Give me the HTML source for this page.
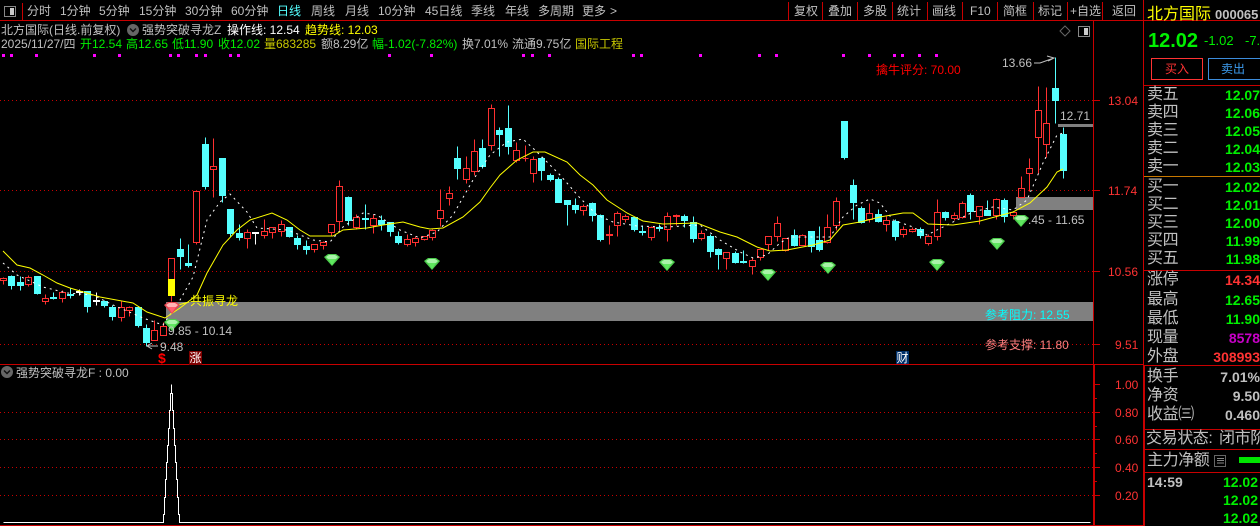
<!DOCTYPE html>
<html><head><meta charset="utf-8"><title>K</title>
<style>
html,body{margin:0;padding:0;background:#000;width:1260px;height:526px;overflow:hidden}
#r{position:relative;width:1260px;height:526px;overflow:hidden;background:#000;font-family:"Liberation Sans","WenQuanYi Zen Hei","Noto Sans CJK SC",sans-serif;font-size:12px;color:#c0c0c0}
#r span{position:absolute;white-space:nowrap;line-height:14px}
.l{font-size:16px;line-height:18px!important;letter-spacing:-.4px}
.v{font-size:14px;font-weight:bold;line-height:16px!important;right:0}
.g{color:#00f000}.w{color:#fff}.y{color:#ff0}.a{color:#f33}.o{color:#c8c800}
svg{position:absolute;left:0;top:0}
</style></head><body><div id="r">
<svg width="1260" height="526" viewBox="0 0 1260 526">
<defs>
<g id="gg"><path d="M-8 3L-4 0H4L8 3L0 12Z" fill="#4ccc4c"/><path d="M-6 3L-3 1H3L6 3L4 5H-4Z" fill="#a8f4a8"/><path d="M-4 5H4L0 11Z" fill="#60e860"/></g>
<g id="gr"><path d="M-8 3L-4 0H4L8 3L0 12Z" fill="#e84650"/><path d="M-6 3L-3 1H3L6 3L4 5H-4Z" fill="#ffb4b4"/><path d="M-4 5H4L0 11Z" fill="#ff6070"/></g>
</defs>
<g fill="#808080" shape-rendering="crispEdges">
<rect x="166" y="302" width="927" height="19"/><rect x="1016" y="197" width="77" height="13"/><rect x="1058" y="124" width="35" height="3"/>
</g>
<g stroke="#c80000" stroke-dasharray="1 3" shape-rendering="crispEdges">
<path d="M0 100.5H1093M0 190.5H1093M0 271.5H1093M0 344.5H1093M0 412.5H1093M0 439.5H1093M0 467.5H1093M0 495.5H1093"/>
</g>
<g transform="translate(.5 .5)" shape-rendering="crispEdges">
<path fill="none" stroke="#ff3030" d="M3 277V278M3 280V284M0 278h6V280h-6zM28 275V277M28 284V286M25 277h6V284h-6zM45 294V298M45 301V304M42 298h6V301h-6zM62 290V292M62 298V302M59 292h6V298h-6zM121 301V307M121 317V321M118 307h6V317h-6zM129 306V307M129 310V316M126 307h6V310h-6zM154 320V330M151 330h6V340h-6zM163 322V326M160 326h6V335h-6zM171 295V301M168 258h6V279h-6zM196 242V244M193 191h6V242h-6zM213 138V166M213 169V197M210 166h6V169h-6zM247 229V232M247 238V248M244 232h6V238h-6zM264 219V231M264 235V238M261 231h6V235h-6zM272 232V238M269 227h6V232h-6zM281 220V224M281 231V236M278 224h6V231h-6zM314 249V252M311 244h6V249h-6zM323 241V242M323 245V249M320 242h6V245h-6zM331 232V236M328 224h6V232h-6zM339 180V186M339 221V230M336 186h6V221h-6zM356 214V217M356 227V229M353 217h6V227h-6zM373 214V218M373 225V233M370 218h6V225h-6zM407 234V239M407 244V246M404 239h6V244h-6zM415 236V238M415 242V246M412 238h6V242h-6zM424 239V240M421 236h6V239h-6zM432 229V230M432 237V240M429 230h6V237h-6zM440 189V210M440 218V226M437 210h6V218h-6zM449 186V193M449 198V205M446 193h6V198h-6zM466 156V168M466 179V183M463 168h6V179h-6zM474 139V151M474 171V175M471 151h6V171h-6zM491 104V108M491 145V150M488 108h6V145h-6zM516 142V150M516 160V162M513 150h6V160h-6zM525 145V161M522 158h6M533 156V159M533 173V182M530 159h6V173h-6zM583 204V206M583 210V215M580 206h6V210h-6zM609 225V244M606 234h6V235h-6zM617 211V213M617 225V236M614 213h6V225h-6zM625 214V216M625 219V222M622 216h6V219h-6zM651 226V227M651 237V240M648 227h6V237h-6zM667 212V216M667 229V241M664 216h6V229h-6zM676 214V225M673 215h6V216h-6zM701 230V233M701 238V240M698 233h6V238h-6zM726 258V269M723 252h6V258h-6zM752 257V260M752 266V274M749 260h6V266h-6zM760 257V260M757 249h6V257h-6zM768 244V250M765 236h6V244h-6zM777 216V223M777 236V241M774 223h6V236h-6zM785 250V251M782 238h6V250h-6zM802 234V235M799 235h6V245h-6zM827 214V227M827 242V243M824 227h6V242h-6zM836 197V201M836 225V230M833 201h6V225h-6zM869 203V213M869 219V222M866 213h6V219h-6zM886 216V220M886 224V231M883 220h6V224h-6zM903 226V229M903 234V237M900 229h6V234h-6zM912 227V229M912 231V232M909 229h6V231h-6zM928 234V236M928 243V245M925 236h6V243h-6zM937 199V212M937 236V240M934 212h6V236h-6zM954 212V215M954 218V220M951 215h6V218h-6zM962 201V203M962 217V218M959 203h6V217h-6zM979 216V224M976 206h6V216h-6zM996 198V199M996 215V219M993 199h6V215h-6zM1013 215V219M1010 212h6V215h-6zM1021 176V188M1018 188h6V197h-6zM1029 158V168M1029 173V191M1026 168h6V173h-6zM1038 86V110M1038 137V173M1035 110h6V137h-6zM1046 87V123M1046 144V157M1043 123h6V144h-6z"/>
<rect x="168" y="279" width="6" height="16" fill="#ff0" stroke="#ff0"/>
<path fill="#55ffff" stroke="#55ffff" d="M11 275V289M8 276h6V285h-6zM20 276V290M17 282h6V285h-6zM37 276V294M34 276h6V293h-6zM53 292V299M50 297h6V298h-6zM70 288V298M67 294h6V295h-6zM87 291V312M84 291h6V306h-6zM104 300V307M101 301h6V305h-6zM112 305V320M109 307h6V316h-6zM138 306V327M135 307h6V325h-6zM146 324V346M143 328h6V342h-6zM180 238V269M177 249h6V256h-6zM188 244V267M185 263h6V265h-6zM205 137V189M202 144h6V186h-6zM222 158V202M219 158h6V195h-6zM230 209V237M227 209h6V233h-6zM239 224V240M236 233h6V237h-6zM289 227V237M286 227h6V236h-6zM297 235V249M294 238h6V244h-6zM306 240V254M303 246h6V249h-6zM348 196V225M345 197h6V220h-6zM365 204V229M362 218h6V219h-6zM381 215V230M378 220h6V224h-6zM390 222V236M387 222h6V231h-6zM398 231V244M395 236h6V242h-6zM457 146V179M454 158h6V168h-6zM482 139V168M479 148h6V166h-6zM499 127V156M496 130h6V134h-6zM508 105V154M505 128h6V146h-6zM541 157V180M538 158h6V170h-6zM550 173V181M547 175h6V179h-6zM558 177V202M555 179h6V202h-6zM567 200V225M564 200h6V204h-6zM575 198V213M572 205h6V209h-6zM592 202V221M589 203h6V215h-6zM600 214V241M597 215h6V239h-6zM634 217V231M631 217h6V229h-6zM642 225V235M639 231h6V232h-6zM659 224V231M656 227h6V228h-6zM684 214V227M681 216h6V220h-6zM693 216V242M690 222h6V238h-6zM710 234V257M707 236h6V251h-6zM718 248V269M715 249h6V254h-6zM735 251V263M732 253h6V262h-6zM743 250V263M740 261h6V262h-6zM794 229V246M791 235h6V245h-6zM811 231V252M808 231h6V246h-6zM819 226V251M816 240h6V249h-6zM844 121V159M841 121h6V157h-6zM853 179V219M850 185h6V202h-6zM861 206V223M858 208h6V222h-6zM878 209V222M875 214h6V221h-6zM895 219V240M892 221h6V236h-6zM920 227V238M917 229h6V235h-6zM945 211V220M942 212h6V217h-6zM970 193V219M967 195h6V211h-6zM987 200V215M984 210h6V215h-6zM1004 198V222M1001 200h6V216h-6zM1055 57V123M1052 88h6V100h-6zM1063 127V178M1060 134h6V170h-6z"/>
<path fill="none" stroke="#fff" d="M79 289V295M76 291h6V292h-6zM96 292V305M93 300h6V301h-6zM255 232V244M252 232h6V233h-6z"/>
</g>
<polyline fill="none" stroke="#fff" stroke-width="1" stroke-dasharray="2 4" points="3,263 17,275 43,287 67,293 93,295 113,305 143,318 163,325 180,300 193,277 207,220 220,202 230,194 247,212 257,228 287,230 313,240 330,242 343,227 363,213 377,215 400,230 420,238 437,232 453,215 473,180 490,155 507,142 523,139 537,152 560,175 580,198 597,215 613,222 637,226 667,227 700,225 720,240 740,252 753,258 767,255 780,243 790,237 813,237 830,237 843,217 857,205 870,199 880,203 893,220 913,227 927,235 947,225 973,212 993,207 1013,210 1027,200 1043,163 1057,135 1063,133"/>
<polyline fill="none" stroke="#ff0" stroke-width="1" points="3,251 17,265 30,268 43,275 57,283 70,288 100,297 133,303 147,312 165,318 180,308 197,295 207,273 223,245 237,230 250,220 272,213 287,220 300,230 310,236 333,236 343,230 367,228 383,225 403,222 420,227 430,229 443,228 463,217 480,202 490,188 500,175 517,160 533,152 545,152 567,162 580,175 593,185 607,200 627,213 643,221 663,224 697,223 720,232 737,237 757,247 770,251 787,250 813,245 830,240 843,225 860,222 880,217 903,213 913,213 928,224 953,225 980,221 1013,212 1030,203 1047,187 1057,172 1063,169"/>
<path d="M178 305l11-3" stroke="#ff0" fill="none"/>
<path d="M1034 63H1040L1054 58M1047 56l7 2-6 3" stroke="#c0c0c0" fill="none"/>
<path d="M148 346H158M152 343l-5 3 5 3" stroke="#c0c0c0" fill="none"/>
<use href="#gg" x="332" y="254"/><use href="#gg" x="432" y="258"/><use href="#gg" x="667" y="259"/><use href="#gg" x="768" y="269"/><use href="#gg" x="828" y="262"/><use href="#gg" x="937" y="259"/><use href="#gg" x="997" y="238"/><use href="#gg" x="1021" y="215"/><use href="#gg" x="172" y="319"/><use href="#gr" x="172" y="302"/>
<g fill="#f0f" shape-rendering="crispEdges"><path d="M2 54h3v3H2zM10 54h3v3h-3zM35 54h3v3h-3zM93 54h3v3h-3zM118 54h3v3h-3zM169 54h3v3h-3zM177 54h3v3h-3zM195 54h3v3h-3zM204 54h3v3h-3zM229 54h3v3h-3zM237 54h3v3h-3zM388 54h3v3h-3zM430 54h3v3h-3zM522 54h3v3h-3zM531 54h3v3h-3zM548 54h3v3h-3zM632 54h3v3h-3zM640 54h3v3h-3zM699 54h3v3h-3zM758 54h3v3h-3zM775 54h3v3h-3zM842 54h3v3h-3zM868 54h3v3h-3zM893 54h3v3h-3zM901 54h3v3h-3zM918 54h3v3h-3zM935 54h3v3h-3z"/></g>
<path fill="none" stroke="#fff" shape-rendering="crispEdges" transform="translate(.5 .5)" d="M3 522H163V514H164V497H165V479H166V462H167V445H168V428H169V410H170V393H171V384V393H172V410H173V428H174V445H175V462H176V479H177V497H178V514H179V522H1090"/>
<g fill="none" stroke="#c80000" shape-rendering="crispEdges">
<path d="M0 20.5H1260M22.5 3V20M788.5 2V20M822.5 2V20M857.5 2V20M892.5 2V20M927.5 2V20M962.5 2V20M997.5 2V20M1033.5 2V20M1067.5 2V20M1102.5 2V20M1143.5 0V526M1093.5 21V526M0 364.5H1143M1144 85.5H1260M1144 270.5H1260M1144 365.5H1260M1144 429.5H1260M1144 449.5H1260M1144 472.5H1260M0 525.5H1143"/>
<path d="M1093 100.5H1100M1093 190.5H1100M1093 271.5H1100M1093 344.5H1100M1094 384.5H1100M1094 398.5H1097M1094 412.5H1100M1094 426.5H1097M1094 439.5H1100M1094 453.5H1097M1094 467.5H1100M1094 481.5H1097M1094 495.5H1100"/>
<path d="M1094.5 365V525M1144.5 365V526" stroke-width="1"/>
</g>
<path d="M1144 176.5H1260" stroke="#c87800" shape-rendering="crispEdges"/>
<rect x="1151.5" y="58.5" width="51" height="21" fill="none" stroke="#f33" shape-rendering="crispEdges"/>
<rect x="1208.5" y="58.5" width="60" height="21" fill="none" stroke="#3c8cdc" shape-rendering="crispEdges"/>
<g shape-rendering="crispEdges">
<rect x="4.5" y="6.5" width="11" height="10" fill="#000" stroke="#888"/><rect x="10" y="8" width="4" height="7" fill="#ccc"/>
<rect x="1078.5" y="26.5" width="11" height="10" fill="#000" stroke="#888"/><rect x="1084" y="28" width="4" height="7" fill="#ccc"/>
</g>
<path d="M1065 26l5 5-5 5-5-5z" fill="none" stroke="#666"/>
<circle cx="133" cy="30" r="6" fill="#666"/><path d="M130 28.5l3 3 3-3" fill="none" stroke="#111" stroke-width="1.5"/>
<circle cx="7" cy="372" r="6" fill="#666"/><path d="M4 370.5l3 3 3-3" fill="none" stroke="#111" stroke-width="1.5"/>
<rect x="1214.5" y="455.5" width="11" height="11" fill="none" stroke="#666"/><path d="M1217 458.500h7M1217 460.500h7M1217 463h7" stroke="#888"/>
<rect x="1239" y="457" width="21" height="6" fill="#00e600"/>
</svg>

<span style="left:27px;top:4px">分时</span><span style="left:60px;top:4px">1分钟</span><span style="left:99px;top:4px">5分钟</span><span style="left:139px;top:4px">15分钟</span><span style="left:185px;top:4px">30分钟</span><span style="left:231px;top:4px">60分钟</span><span style="left:277px;top:4px;color:#55ffff">日线</span><span style="left:311px;top:4px">周线</span><span style="left:345px;top:4px">月线</span><span style="left:378px;top:4px">10分钟</span><span style="left:425px;top:4px">45日线</span><span style="left:471px;top:4px">季线</span><span style="left:505px;top:4px">年线</span><span style="left:538px;top:4px">多周期</span><span style="left:582px;top:4px">更多</span><span style="left:610px;top:4px">&gt;</span>
<span style="left:794px;top:4px">复权</span><span style="left:828px;top:4px">叠加</span><span style="left:863px;top:4px">多股</span><span style="left:897px;top:4px">统计</span><span style="left:932px;top:4px">画线</span><span style="left:970px;top:4px">F10</span><span style="left:1003px;top:4px">简框</span><span style="left:1038px;top:4px">标记</span><span style="left:1070px;top:4px">+自选</span><span style="left:1112px;top:4px">返回</span>

<span style="left:1px;top:23px">北方国际(日线.前复权)</span><span style="left:142px;top:23px">强势突破寻龙Z</span><span style="left:227px;top:23px" class="w">操作线: 12.54</span><span style="left:305px;top:23px" class="y">趋势线: 12.03</span>
<span style="left:1px;top:37px">2025/11/27/四</span><span style="left:80px;top:37px" class="g">开12.54</span><span style="left:126px;top:37px" class="g">高12.65</span><span style="left:172px;top:37px" class="g">低11.90</span><span style="left:218px;top:37px" class="g">收12.02</span><span style="left:264px;top:37px" class="o">量683285</span><span style="left:321px;top:37px">额8.29亿</span><span style="left:372px;top:37px" class="g">幅-1.02(-7.82%)</span><span style="left:462px;top:37px">换7.01%</span><span style="left:512px;top:37px">流通9.75亿</span><span style="left:575px;top:37px" class="o">国际工程</span>

<span style="left:876px;top:63px;color:#f00">擒牛评分: 70.00</span>
<span style="left:1002px;top:56px">13.66</span>
<span style="left:1060px;top:109px">12.71</span>
<span style="left:190px;top:294px" class="y">共振寻龙</span>
<span style="left:168px;top:324px">9.85 - 10.14</span>
<span style="left:160px;top:340px">9.48</span>
<span style="left:1028px;top:213px">.45 - 11.65</span>
<span style="left:985px;top:308px;color:#0ff">参考阻力: 12.55</span>
<span style="left:985px;top:338px;color:#ff8080">参考支撑: 11.80</span>
<span style="left:158px;top:351px;color:#f00;font-weight:bold;font-size:14px">$</span>
<span style="left:189px;top:351px;width:13px;height:14px;background:#800000;color:#fff;text-align:center">涨</span>
<span style="left:896px;top:351px;width:13px;height:13px;background:#00306a;color:#fff;text-align:center">财</span>
<span style="left:16px;top:366px">强势突破寻龙F : 0.00</span>

<span class="a" style="left:1108px;top:94px">13.04</span><span class="a" style="left:1108px;top:184px">11.74</span><span class="a" style="left:1108px;top:265px">10.56</span><span class="a" style="left:1115px;top:338px">9.51</span>
<span class="a" style="left:1115px;top:378px">1.00</span><span class="a" style="left:1115px;top:406px">0.80</span><span class="a" style="left:1115px;top:433px">0.60</span><span class="a" style="left:1115px;top:461px">0.40</span><span class="a" style="left:1115px;top:489px">0.20</span>

<span style="left:1147px;top:6px;font-size:16px;line-height:18px;color:#ff0">北方国际</span>
<span style="left:1215px;top:8px;font-size:13px;font-weight:bold;color:#c0c0c0">000065</span>
<span class="g" style="left:1148px;top:30px;font-size:20px;font-weight:bold;line-height:22px">12.02</span>
<span class="g" style="left:1204px;top:34px;font-size:13px">-1.02</span><span class="g" style="left:1245px;top:34px;font-size:13px">-7.82%</span>
<span class="a" style="left:1165px;top:62px">买入</span><span style="left:1221px;top:62px;color:#3c9cf0">卖出</span>

<span class="l" style="left:1147px;top:86px">卖五</span><span class="v g" style="top:87px">12.07</span>
<span class="l" style="left:1147px;top:104px">卖四</span><span class="v g" style="top:105px">12.06</span>
<span class="l" style="left:1147px;top:122px">卖三</span><span class="v g" style="top:123px">12.05</span>
<span class="l" style="left:1147px;top:140px">卖二</span><span class="v g" style="top:141px">12.04</span>
<span class="l" style="left:1147px;top:158px">卖一</span><span class="v g" style="top:159px">12.03</span>
<span class="l" style="left:1147px;top:178px">买一</span><span class="v g" style="top:179px">12.02</span>
<span class="l" style="left:1147px;top:196px">买二</span><span class="v g" style="top:197px">12.01</span>
<span class="l" style="left:1147px;top:214px">买三</span><span class="v g" style="top:215px">12.00</span>
<span class="l" style="left:1147px;top:232px">买四</span><span class="v g" style="top:233px">11.99</span>
<span class="l" style="left:1147px;top:250px">买五</span><span class="v g" style="top:251px">11.98</span>
<span class="l" style="left:1147px;top:271px">涨停</span><span class="v a" style="top:272px">14.34</span>
<span class="l" style="left:1147px;top:291px">最高</span><span class="v g" style="top:292px">12.65</span>
<span class="l" style="left:1147px;top:310px">最低</span><span class="v g" style="top:311px">11.90</span>
<span class="l" style="left:1147px;top:329px">现量</span><span class="v" style="top:330px;color:#c800c8">8578</span>
<span class="l" style="left:1147px;top:348px">外盘</span><span class="v a" style="top:349px">308993</span>
<span class="l" style="left:1147px;top:368px">换手</span><span class="v" style="top:369px">7.01%</span>
<span class="l" style="left:1147px;top:387px">净资</span><span class="v" style="top:388px">9.50</span>
<span class="l" style="left:1147px;top:406px">收益㈢</span><span class="v" style="top:407px">0.460</span>
<span class="l" style="left:1146px;top:430px">交易状态:</span><span class="l" style="left:1219px;top:430px">闭市阶段</span>
<span class="l" style="left:1147px;top:452px">主力净额</span>
<span class="v" style="left:1147px;right:auto;top:474px">14:59</span>
<span class="v g" style="right:2px;top:474px">12.02</span><span class="v g" style="right:2px;top:492px">12.02</span><span class="v g" style="right:2px;top:510px">12.02</span>
</div></body></html>
